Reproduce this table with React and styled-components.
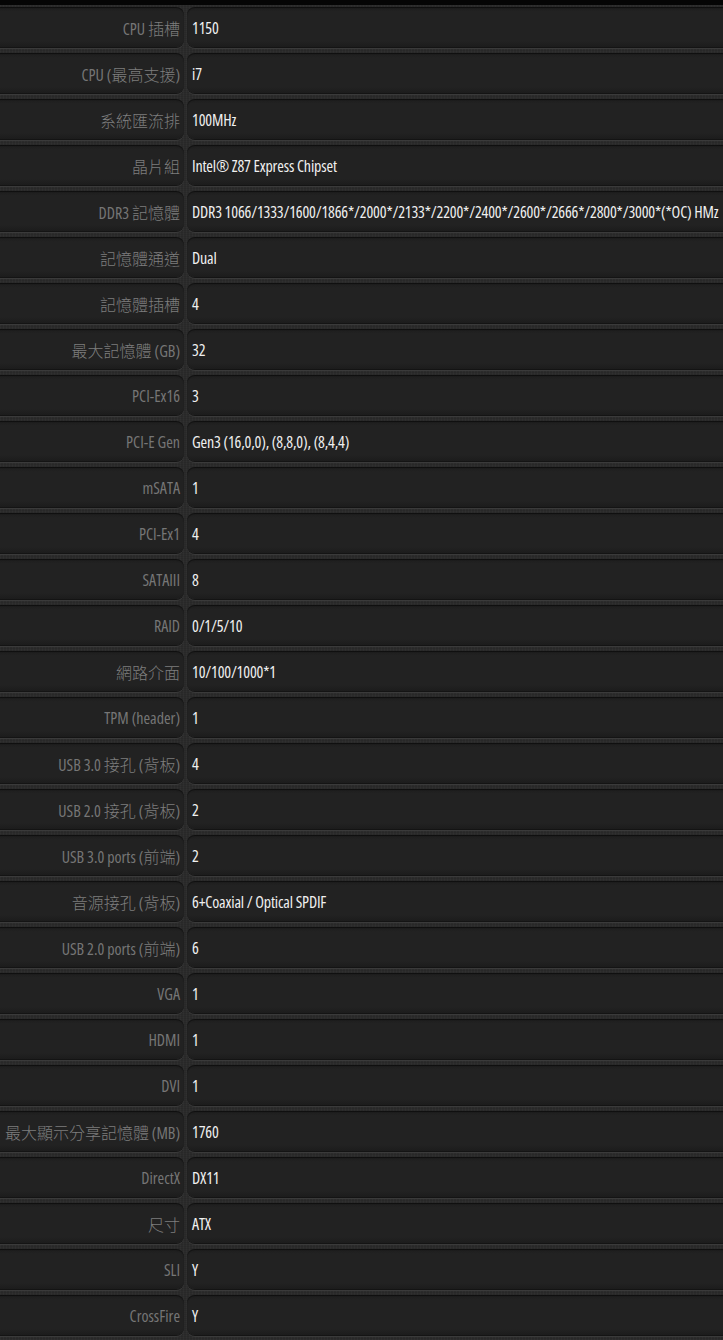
import React from 'react';
import styled, { createGlobalStyle } from 'styled-components';

const GlobalStyle = createGlobalStyle`
    html, body {
        margin: 0;
        padding: 0;
        background-color: #2a2a2a;
        overflow-x: hidden;
    }
`;

const Page = styled.div`
    width: 100%;
    min-height: 1340px;
    border-top: 5px solid #050505;
    background-color: #2b2b2b;
    background-image: repeating-linear-gradient(0deg, rgba(0,0,0,0.08) 0px, rgba(0,0,0,0.08) 1px, transparent 1px, transparent 2px),
        repeating-linear-gradient(90deg, rgba(255,255,255,0.025) 0px, rgba(255,255,255,0.025) 1px, transparent 1px, transparent 3px);
    overflow: hidden;
`;

const SpecTable = styled.div`
    display: flex;
    flex-direction: column;
    gap: 6px;
    padding-top: 2px;
    margin: 0 -12px 0 -10px;
`;

const SpecRow = styled.div`
    display: grid;
    grid-template-columns: 194px 1fr;
    column-gap: 3px;
    height: 40px;
`;

const Cell = styled.div`
    display: flex;
    align-items: center;
    height: 40px;
    padding-top: 1px;
    box-sizing: border-box;
    border-radius: 8px;
    background: linear-gradient(180deg, #1d1d1d 0%, #222 12%, #222 85%, #1c1c1c 100%);
    box-shadow: inset 0 1px 1px rgba(0,0,0,0.5), 0 1px 0 #141414, 0 2px 0 #3a3a3a;
    font-family: "Open Sans", "Noto Sans CJK TC", sans-serif;
    font-stretch: 76%;
    font-size: 16px;
    white-space: nowrap;
`;

const Label = styled(Cell)`
    justify-content: flex-end;
    padding-right: 4px;
    color: #767676;
`;

const LabelText = styled.span`
    white-space: pre;
`;

const Han = styled.span`
    font-family: "Noto Sans CJK TC", sans-serif;
    font-size: 16px;
    font-weight: 300;
    color: #7e7e7e;
`;

const Value = styled(Cell)`
    padding-left: 5px;
    color: #f0f0f0;
    letter-spacing: -0.16px;
`;

const specs = [
    ['CPU 插槽', '1150'],
    ['CPU (最高支援)', 'i7'],
    ['系統匯流排', '100MHz'],
    ['晶片組', 'Intel® Z87 Express Chipset'],
    ['DDR3 記憶體', 'DDR3 1066/1333/1600/1866*/2000*/2133*/2200*/2400*/2600*/2666*/2800*/3000*(*OC) HMz'],
    ['記憶體通道', 'Dual'],
    ['記憶體插槽', '4'],
    ['最大記憶體 (GB)', '32'],
    ['PCI-Ex16', '3'],
    ['PCI-E Gen', 'Gen3 (16,0,0), (8,8,0), (8,4,4)'],
    ['mSATA', '1'],
    ['PCI-Ex1', '4'],
    ['SATAIII', '8'],
    ['RAID', '0/1/5/10'],
    ['網路介面', '10/100/1000*1'],
    ['TPM (header)', '1'],
    ['USB 3.0 接孔 (背板)', '4'],
    ['USB 2.0 接孔 (背板)', '2'],
    ['USB 3.0 ports (前端)', '2'],
    ['音源接孔 (背板)', '6+Coaxial / Optical SPDIF'],
    ['USB 2.0 ports (前端)', '6'],
    ['VGA', '1'],
    ['HDMI', '1'],
    ['DVI', '1'],
    ['最大顯示分享記憶體 (MB)', '1760'],
    ['DirectX', 'DX11'],
    ['尺寸', 'ATX'],
    ['SLI', 'Y'],
    ['CrossFire', 'Y'],
];

// split a label so the Chinese runs get their own span
function renderLabel(text) {
    return text.split(/([\u3400-\u9fff]+)/).filter(Boolean).map((part, i) =>
        /[\u3400-\u9fff]/.test(part) ? <Han key={i}>{part}</Han> : part
    );
}

export default function App() {
    return (
        <>
            <GlobalStyle />
            <Page>
                <SpecTable>
                    {specs.map(([label, value]) => (
                        <SpecRow key={label}>
                            <Label>
                                <LabelText>{renderLabel(label)}</LabelText>
                            </Label>
                            <Value>{value}</Value>
                        </SpecRow>
                    ))}
                </SpecTable>
            </Page>
        </>
    );
}
